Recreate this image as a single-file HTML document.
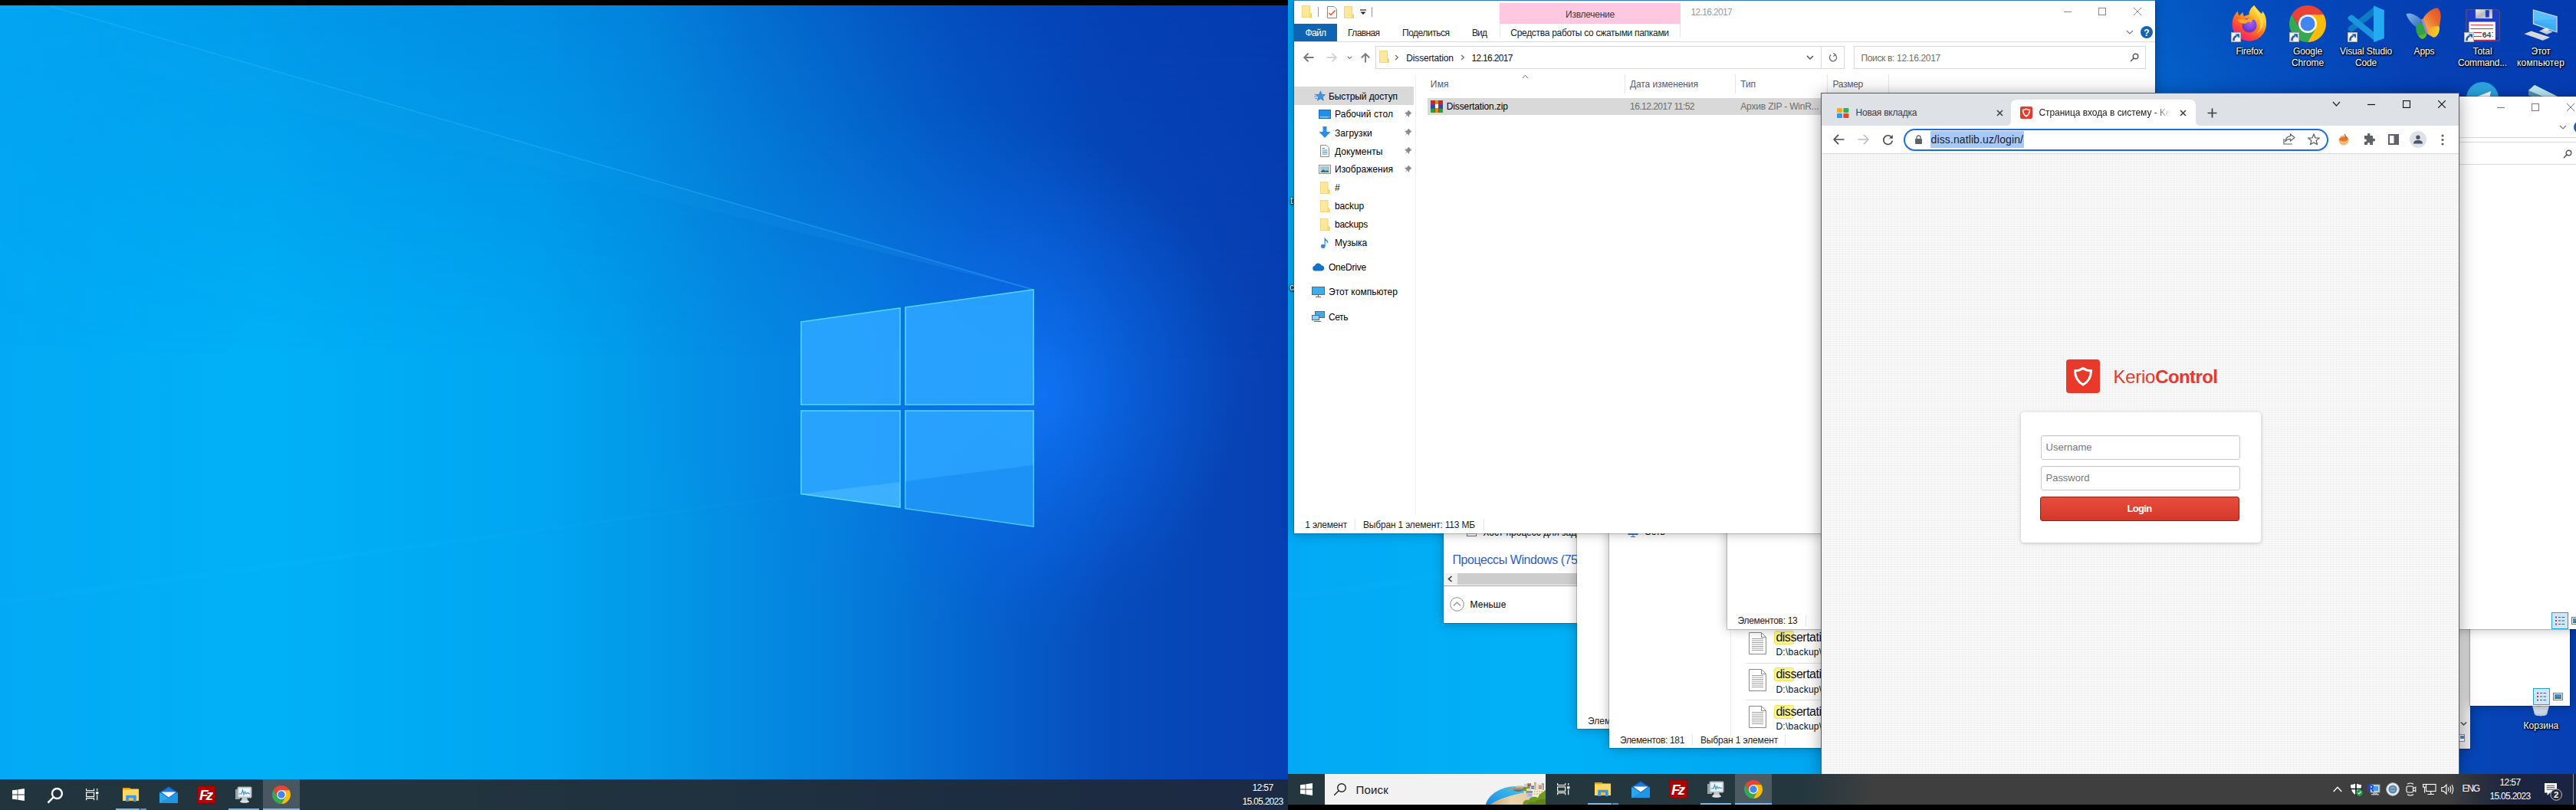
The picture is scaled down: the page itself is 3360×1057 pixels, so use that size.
<!DOCTYPE html>
<html lang="ru"><head><meta charset="utf-8"><title>Desktop</title>
<style>
html,body{margin:0;padding:0;background:#000;overflow:hidden}
body{width:3360px;height:1057px;position:relative;font-family:"Liberation Sans",sans-serif;font-size:12px;color:#000}
body>div,body>svg{position:absolute;box-sizing:border-box}
.t{white-space:nowrap;overflow:visible}
.sh{text-shadow:0 1px 2px #000,1px 1px 2px #000,0 0 3px rgba(0,0,0,.8)}
</style></head><body>
<svg width="0" height="0" style="left:0;top:0">
<defs>
<linearGradient id="wg" x1="0" x2="1" y1="0" y2="0">
<stop offset="0" stop-color="#03a9f4"/><stop offset=".208" stop-color="#00b1f7"/><stop offset=".417" stop-color="#00a6f1"/>
<stop offset=".536" stop-color="#0394e5"/><stop offset=".655" stop-color="#047edc"/><stop offset=".774" stop-color="#0560cc"/>
<stop offset=".863" stop-color="#064bbb"/><stop offset="1" stop-color="#063fb3"/>
</linearGradient>
<linearGradient id="wtx" x1="0" x2="1680" y1="0" y2="0" gradientUnits="userSpaceOnUse">
<stop offset="0" stop-color="#0438b0" stop-opacity=".04"/><stop offset=".25" stop-color="#0438b0" stop-opacity=".20"/><stop offset=".5" stop-color="#0438b0" stop-opacity=".24"/><stop offset=".655" stop-color="#0438b0" stop-opacity=".44"/><stop offset=".75" stop-color="#0438b0" stop-opacity=".56"/><stop offset="1" stop-color="#0438b0" stop-opacity=".6"/>
</linearGradient>
<linearGradient id="wty" x1="0" x2="0" y1="0" y2="460" gradientUnits="userSpaceOnUse">
<stop offset="0" stop-color="#fff"/><stop offset="1" stop-color="#000"/>
</linearGradient>
<mask id="wtm" maskUnits="userSpaceOnUse" x="0" y="0" width="1680" height="1050"><rect width="1680" height="460" fill="url(#wty)"/></mask>
<radialGradient id="wglow" cx="0" cy="0" r="1" gradientUnits="userSpaceOnUse" gradientTransform="translate(1360 510) scale(250 330)">
<stop offset="0" stop-color="#1478ff" stop-opacity=".7"/><stop offset=".4" stop-color="#0e6cf4" stop-opacity=".42"/><stop offset="1" stop-color="#0a58dc" stop-opacity="0"/>
</radialGradient>
<radialGradient id="wglow2" cx="0" cy="0" r="1" gradientUnits="userSpaceOnUse" gradientTransform="translate(1230 470) scale(420 330)">
<stop offset="0" stop-color="#0c8cf8" stop-opacity=".42"/><stop offset=".5" stop-color="#0c84f4" stop-opacity=".22"/><stop offset="1" stop-color="#0a78ec" stop-opacity="0"/>
</radialGradient>
<linearGradient id="wbeam" x1="0" x2="1348" y1="0" y2="0" gradientUnits="userSpaceOnUse">
<stop offset="0" stop-color="#fff" stop-opacity="0"/><stop offset=".6" stop-color="#30c0ff" stop-opacity=".06"/><stop offset="1" stop-color="#40c8ff" stop-opacity=".25"/>
</linearGradient>
<symbol id="wp" viewBox="0 0 1680 1050">
<rect width="1680" height="1050" fill="url(#wg)"/>
<rect width="1680" height="460" fill="url(#wtx)" mask="url(#wtm)"/>
<rect width="1680" height="1050" fill="url(#wglow2)"/>
<rect width="1680" height="1050" fill="url(#wglow)"/>
<polygon points="1348,371 65,1 0,-18 0,40" fill="url(#wbeam)" opacity=".5"/>
<line x1="1348" y1="371" x2="65" y2="1" stroke="#38b8ff" stroke-opacity=".4" stroke-width="1.5"/>
<polygon points="1045,637.5 0,774 0,784 1045,640" fill="#5fd8ff" opacity=".03"/>
<g fill="#2aa5ff" fill-opacity=".92" stroke="#55d4ff" stroke-width="1.6">
<polygon points="1045,413 1174,395 1174,521 1045,521"/>
<polygon points="1181,394 1348,371 1348,521 1181,521"/>
<polygon points="1045,529 1174,529 1174,655 1045,637.5"/>
<polygon points="1181,529 1348,529 1348,680 1181,656.5"/>
</g>
<polygon points="1045,637.5 1174,622 1174,655" fill="#7fe0ff" opacity=".25"/>
<polygon points="1181,621 1348,600 1348,680 1181,656.5" fill="#0a78e8" opacity=".35"/>
</symbol>
</defs>
</svg>
<svg style="left:0;top:7px" width="1680" height="1050"><use href="#wp"/></svg>
<svg style="left:1680px;top:0" width="1680" height="1050"><use href="#wp"/></svg>
<div style="left:0px;top:1017px;width:1680px;height:40px;background:linear-gradient(90deg,#22343d 0%,#22343d 30%,#1f3040 60%,#1b2943 100%)"></div>
<svg style="left:16px;top:1029px;" width="16" height="16" viewBox="0 0 16 16"><g fill="#fff"><polygon points="0,2.3 6.6,1.4 6.6,7.6 0,7.6"/><polygon points="7.4,1.3 16,0 16,7.6 7.4,7.6"/><polygon points="0,8.4 6.6,8.4 6.6,14.6 0,13.7"/><polygon points="7.4,8.4 16,8.4 16,16 7.4,14.7"/></g></svg>
<svg style="left:61px;top:1026.5px;" width="22" height="22" viewBox="0 0 18 18"><g fill="none" stroke="#fff" stroke-width="2"><circle cx="11" cy="7" r="5.3"/><line x1="7.2" y1="10.8" x2="1.2" y2="16.8"/></g></svg>
<svg style="left:111.7px;top:1029.3px;" width="17" height="16" viewBox="0 0 17 16"><g fill="none" stroke="#fff" stroke-width="1.2"><path d="M.6,0V2.5H10.6V0 M.6,15.3V12.7H10.6V15.3"/><rect x=".6" y="4.9" width="10" height="5.6"/><path d="M14.7,0V2.8 M14.7,8.2V15.3"/></g><rect x="13.1" y="4.2" width="3.3" height="3.1" fill="#fff"/></svg>
<div style="left:343px;top:1017px;width:48px;height:40px;background:rgba(255,255,255,.18)"></div>
<svg style="left:159.7px;top:1028px;" width="21.6" height="18" viewBox="0 0 21.6 18"><path d="M0,.9 a.9,.9 0 0 1 .9,-.9 h8.2 l1.4,1.5 h10.2 a.9,.9 0 0 1 .9,.9 v14.6 h-21.6z" fill="#ffd55c"/><path d="M0,.9 a.9,.9 0 0 1 .9,-.9 h8.2 l1.4,1.5 l-1.2,1.1 h-9.3z" fill="#eaa200"/><path d="M0,2.6h21.6v14.4h-21.6z" fill="#ffd862"/><path d="M4.2,18v-7.2a1,1 0 0 1 1,-1h11.6a1,1 0 0 1 1,1v7.2h-3.9v-4.7h-5.7v4.7z" fill="#3b97e8"/><rect x="8.2" y="13.3" width="5.7" height="3.7" fill="#f6be2e"/></svg>
<svg style="left:208px;top:1025px;" width="24" height="24" viewBox="0 0 24 24"><path d="M0,9 L12,1 L24,9 V23 H0z" fill="#0f5fb8"/><path d="M2.5,9 L12,2.8 L21.5,9 V14 H2.5z" fill="#1d7ad6"/><path d="M2.5,8.5 H21.5 L12,15.5z" fill="#fff"/><path d="M0,9 L12,16.5 L24,9 V23 H0z" fill="#2ba7ee"/><path d="M24,9 V23 H0 L24,9z" fill="#1a8fe0" opacity=".7"/></svg>
<svg style="left:257px;top:1025px;" width="24" height="24" viewBox="0 0 24 24"><rect x=".5" y=".5" width="23" height="23" fill="#b30000" stroke="#8e0000" stroke-dasharray="1.5 1"/><text x="3" y="19" font-family="Liberation Sans,sans-serif" font-weight="bold" font-style="italic" font-size="19" fill="#fff" textLength="18">Fz</text></svg>
<svg style="left:306px;top:1025px;" width="24" height="24" viewBox="0 0 24 24"><rect x="1" y="5" width="6" height="13" fill="#9aa3a8"/><rect x="4" y="2" width="18" height="14" rx="1" fill="#d8dde0" stroke="#9ea7ab"/><rect x="6" y="4" width="14" height="10" fill="#e9f4fb"/><polyline points="6,11 9,11 10.5,6 12,12 13.5,8 15,11 17,9.5 20,11" fill="none" stroke="#3a8fd0" stroke-width="1.1"/><path d="M10,16h6l1.5,4h-9z" fill="#c3c9cc"/><ellipse cx="13" cy="21" rx="6" ry="1.8" fill="#dfe3e5"/></svg>
<svg style="left:355px;top:1025px;" width="24" height="24" viewBox="0 0 24 24"><path d="M12,6 L22.392,6 A12,12 0 0 0 1.608,6 L6.804,15z" fill="#ea4335"/><path d="M12,6 L22.392,6 A12,12 0 0 1 12,24 L17.196,15z" fill="#fbbc05"/><path d="M17.196,15 L12,24 A12,12 0 0 1 1.608,6 L6.804,15z" fill="#34a853"/><circle cx="12" cy="12" r="6" fill="#fff"/><circle cx="12" cy="12" r="4.75" fill="#4285f4"/></svg>
<div style="left:151px;top:1055px;width:31px;height:2px;background:#76b9ed"></div>
<div style="left:183px;top:1055px;width:8px;height:2px;background:#5d93bf"></div>
<div style="left:298px;top:1055px;width:40px;height:2px;background:#76b9ed"></div>
<div style="left:343px;top:1055px;width:48px;height:2px;background:#76b9ed"></div>
<div class="t" style="top:1020.3px;height:17px;line-height:17px;font-size:12px;color:#fff;letter-spacing:-0.606px;left:1347px;width:600px;text-align:center;">12:57</div>
<div class="t" style="top:1038.3px;height:17px;line-height:17px;font-size:12px;color:#fff;letter-spacing:-0.706px;left:1347px;width:600px;text-align:center;">15.05.2023</div>
<svg style="left:2910px;top:6px;" width="48" height="48" viewBox="0 0 48 48"><defs><linearGradient id="ffg" x1="40" y1="4" x2="10" y2="46" gradientUnits="userSpaceOnUse"><stop offset="0" stop-color="#fff04a"/><stop offset=".28" stop-color="#ffbd2e"/><stop offset=".52" stop-color="#ff7a1a"/><stop offset=".78" stop-color="#ff3a4a"/><stop offset="1" stop-color="#e81b8c"/></linearGradient><radialGradient id="ffp" cx=".55" cy=".35" r=".7"><stop offset="0" stop-color="#a95cff"/><stop offset="1" stop-color="#5b2fbf"/></radialGradient></defs><path d="M30.2,1 C33,5 36,8 40,12 C41,10.5 41,9 40.5,8 C45,13 46.5,19 46,26 C45.5,38 36,47.5 24,47.5 C11,47.5 1.6,38 1.6,26 C1.6,19 4,13 9,8.5 C9,11 9.5,13 11,14.5 C12.5,12.5 14,11 16,10 C15.5,12 16,14 17,15.5 C19,14 21.5,13.5 23.5,13.5 C23,9 26,4 30.2,1z" fill="url(#ffg)"/><path d="M30.2,1 C28,8 34,12 37,18 C40,25 38,33 33,38 C40,34 43.5,26 41.5,19 C40,13 34,8 30.2,1z" fill="#ffe24a" opacity=".75"/><circle cx="24" cy="27" r="9.6" fill="url(#ffp)"/><path d="M8,20 C12,18.5 17,18.5 20.5,20 C23,17.5 27,17 31,18.2 C28.5,19.2 27,21 26.5,23.5 C24,21.8 21,22.4 19.5,24.6 C16,25.5 11,24 8,20z" fill="#ffa726"/><path d="M14.5,26 C13,31 16,37 22,39 C17,39.5 11.5,35 11,29 C11,27.5 12.5,26 14.5,26z" fill="#ff5a2a" opacity=".55"/></svg>
<svg style="left:2910px;top:42px;" width="13" height="13" viewBox="0 0 13 13"><rect x=".5" y=".5" width="12" height="12" fill="#f2f2f2" stroke="#a8adb4"/><path d="M3.6,11.2 C3,7.6 4.8,5.4 7.6,5 " fill="none" stroke="#2b5ea8" stroke-width="2.6"/><path d="M5.6,2.2 H11 V7.8 L9,5.9 L7.4,4.2z" fill="#2b5ea8"/></svg>
<div class="t sh" style="top:58.5px;height:17px;line-height:17px;font-size:12px;color:#fff;letter-spacing:-0.241px;left:2634px;width:600px;text-align:center;">Firefox</div>
<svg style="left:2986px;top:6.8px;" width="48" height="48" viewBox="0 0 24 24"><path d="M12,6 L22.392,6 A12,12 0 0 0 1.608,6 L6.804,15z" fill="#ea4335"/><path d="M12,6 L22.392,6 A12,12 0 0 1 12,24 L17.196,15z" fill="#fbbc05"/><path d="M17.196,15 L12,24 A12,12 0 0 1 1.608,6 L6.804,15z" fill="#34a853"/><circle cx="12" cy="12" r="6" fill="#fff"/><circle cx="12" cy="12" r="4.75" fill="#4285f4"/></svg>
<svg style="left:2986px;top:42px;" width="13" height="13" viewBox="0 0 13 13"><rect x=".5" y=".5" width="12" height="12" fill="#f2f2f2" stroke="#a8adb4"/><path d="M3.6,11.2 C3,7.6 4.8,5.4 7.6,5 " fill="none" stroke="#2b5ea8" stroke-width="2.6"/><path d="M5.6,2.2 H11 V7.8 L9,5.9 L7.4,4.2z" fill="#2b5ea8"/></svg>
<div class="t sh" style="top:58.5px;height:17px;line-height:17px;font-size:12px;color:#fff;letter-spacing:-0.117px;left:2710px;width:600px;text-align:center;">Google</div>
<div class="t sh" style="top:73.5px;height:17px;line-height:17px;font-size:12px;color:#fff;letter-spacing:-0.115px;left:2710px;width:600px;text-align:center;">Chrome</div>
<svg style="left:3062px;top:7px;" width="48" height="48" viewBox="0 0 48 48"><path d="M35.7,1.3 L1.3,28.6 C0,30 0,32 1.5,33 L4,34.5 C5.2,35 6.5,34.6 7.6,33.6 L35.7,12z" fill="#0b7cc2"/><path d="M1.3,18.8 C0,17.5 0,15.5 1.5,14.4 L4,12.8 C5.2,12.2 6.5,12.6 7.6,13.6 L35.7,36 V46.6z" fill="#1a96dc"/><path d="M34.4,.4 L47.8,6.3 V42.9 L35.3,47.8 C34.6,48 34,47.5 34,46.5 V1.6 C34,.8 34.2,.4 34.4,.4z" fill="#25abf3"/></svg>
<svg style="left:3062px;top:42px;" width="13" height="13" viewBox="0 0 13 13"><rect x=".5" y=".5" width="12" height="12" fill="#f2f2f2" stroke="#a8adb4"/><path d="M3.6,11.2 C3,7.6 4.8,5.4 7.6,5 " fill="none" stroke="#2b5ea8" stroke-width="2.6"/><path d="M5.6,2.2 H11 V7.8 L9,5.9 L7.4,4.2z" fill="#2b5ea8"/></svg>
<div class="t sh" style="top:58.5px;height:17px;line-height:17px;font-size:12px;color:#fff;letter-spacing:-0.141px;left:2786px;width:600px;text-align:center;">Visual Studio</div>
<div class="t sh" style="top:73.5px;height:17px;line-height:17px;font-size:12px;color:#fff;letter-spacing:-0.172px;left:2786px;width:600px;text-align:center;">Code</div>
<svg style="left:3138px;top:10px;" width="47" height="42" viewBox="0 0 47 42"><defs><linearGradient id="bf1" x1="22" y1="22" x2="44" y2="4" gradientUnits="userSpaceOnUse"><stop offset="0" stop-color="#f6a848"/><stop offset=".6" stop-color="#e96a2c"/><stop offset="1" stop-color="#e2542a"/></linearGradient><linearGradient id="bf2" x1="2" y1="8" x2="20" y2="24" gradientUnits="userSpaceOnUse"><stop offset="0" stop-color="#8cc0ec"/><stop offset="1" stop-color="#3f74c4"/></linearGradient><linearGradient id="bf3" x1="28" y1="30" x2="43" y2="34" gradientUnits="userSpaceOnUse"><stop offset="0" stop-color="#f4a030"/><stop offset="1" stop-color="#fad21e"/></linearGradient></defs><path d="M20.6,16 C12,8 5,6.5 .5,8 C2,14 7,21 14.5,26 L21,24z" fill="url(#bf2)" opacity=".9"/><path d="M15.2,21.3 C12.5,25 12.5,31 16,36 C18,39.5 21,41.5 23,40.5 C26,39 28,36 27,31 L22,19.5z" fill="#2fa444"/><path d="M16,36 C18,39.5 21,41.5 23,40.5 C25.5,39 27.5,36.5 27.2,33 C23,35 19,36.5 16,36z" fill="#5cb534"/><path d="M21.5,16 C26,7 34,1 41.5,.3 C45.5,4 46.5,10 45,17 C44.5,21 44,23.5 43.8,25 L26,30.5z" fill="url(#bf1)"/><path d="M26,29.5 C32,25 39,23.5 43.8,24.8 C44.5,29 43.5,33 41,36 C39,38.5 36.5,39.5 35,38.2 L28.5,34.5z" fill="url(#bf3)"/><path d="M19.8,15.6 L22.8,14.6 L29,32.4 L26.6,33.6z" fill="#9d86cc"/></svg>
<div class="t sh" style="top:58.5px;height:17px;line-height:17px;font-size:12px;color:#fff;letter-spacing:-0.090px;left:2862px;width:600px;text-align:center;">Apps</div>
<svg style="left:3216px;top:11.5px;" width="45" height="42" viewBox="0 0 45 42"><defs><linearGradient id="tcm" x1="0" y1="0" x2="1" y2="1"><stop offset="0" stop-color="#f4f4f4"/><stop offset=".5" stop-color="#b8b8b8"/><stop offset="1" stop-color="#ececec"/></linearGradient></defs><path d="M2,.3 H41.5 L44.6,3 V41.7 H.4 V2 A1.6,1.6 0 0 1 2,.3z" fill="#1d3cc8" stroke="#8a7440" stroke-width=".5"/><path d="M4.6,1.5V11.5" stroke="#10248c" stroke-width=".6" stroke-dasharray="1 .8"/><rect x="12.9" y=".3" width="21.9" height="11.8" fill="url(#tcm)"/><rect x="25.9" y="1.2" width="4.9" height="9.4" fill="#1d3cc8"/><rect x="4.4" y="16.5" width="34.4" height="23.5" fill="#fff"/><path d="M6.5,20.7H36 M6.5,25.6H36 M6.5,30.5H21 M34.5,30.5H36 M6.5,35.6H21 M34.5,35.6H36" stroke="#d8202e" stroke-width="1"/><text x="21.5" y="36.6" font-family="Liberation Mono,monospace" font-weight="bold" font-size="10.5" fill="#4a4a52" textLength="12">64</text><rect x="4.4" y="39.8" width="35" height="2" fill="#c8283c"/><rect x="40" y="37.5" width="1.4" height="1.4" fill="#0a1460"/></svg>
<svg style="left:3214px;top:42px;" width="13" height="13" viewBox="0 0 13 13"><rect x=".5" y=".5" width="12" height="12" fill="#f2f2f2" stroke="#a8adb4"/><path d="M3.6,11.2 C3,7.6 4.8,5.4 7.6,5 " fill="none" stroke="#2b5ea8" stroke-width="2.6"/><path d="M5.6,2.2 H11 V7.8 L9,5.9 L7.4,4.2z" fill="#2b5ea8"/></svg>
<div class="t sh" style="top:58.5px;height:17px;line-height:17px;font-size:12px;color:#fff;letter-spacing:-0.072px;left:2938px;width:600px;text-align:center;">Total</div>
<div class="t sh" style="top:73.5px;height:17px;line-height:17px;font-size:12px;color:#fff;letter-spacing:-0.136px;left:2938px;width:600px;text-align:center;">Command...</div>
<svg style="left:3292px;top:11px;" width="44" height="43" viewBox="0 0 44 43"><path d="M11.8,1.2 L43.5,10.2 V31.8 L11.8,20.6z" fill="#d4dee6"/><path d="M12.9,2.8 L42.4,11.2 V30.2 L12.9,19.6z" fill="#3cacf6"/><path d="M12.9,2.8 L42.4,11.2 V14 L12.9,16z" fill="#62c4ff" opacity=".8"/><path d="M12.9,12 L42.4,14 V22 L12.9,17z" fill="#52baff" opacity=".45"/><path d="M42.4,11.2 L43.5,10.2 V31.8 L42.4,30.2z" fill="#aebac4"/><path d="M19.7,29.6 L27.3,26.5 L38,30.5 L30,33.8z" fill="#c4ccd4"/><path d="M24,27 L31,25.5 L33,28.5 L27,30z" fill="#dfe5ea"/><path d="M.5,33.2 L9.9,29.6 L34,37.7 L24.6,41.7z" fill="#e6eaee"/><path d="M3,33.3 L27,41 M5.5,32.3 L29.3,40 M8,31.3 L31.6,39 M5,34.5 L11.5,31.8 M9.5,36 L16,33.3 M14,37.5 L20.5,34.8 M18.5,39 L25,36.3 M22.5,40.4 L29.3,37.6" stroke="#bcc5cc" stroke-width=".6"/></svg>
<div class="t sh" style="top:58.5px;height:17px;line-height:17px;font-size:12px;color:#fff;letter-spacing:-0.227px;left:3014px;width:600px;text-align:center;">Этот</div>
<div class="t sh" style="top:73.5px;height:17px;line-height:17px;font-size:12px;color:#fff;letter-spacing:0.165px;left:3014px;width:600px;text-align:center;">компьютер</div>
<svg style="left:3217px;top:107px;" width="42" height="42" viewBox="0 0 42 42"><circle cx="21" cy="21" r="21" fill="#2aa3dc"/><path d="M9,21 L32,12 L28,32 L21,27 L17,31 L16,25z" fill="#fff"/></svg>
<svg style="left:3298px;top:110px;" width="44" height="30" viewBox="0 0 44 30"><path d="M0,8 L8,1 L44,19 L44,30 L0,14z" fill="#8cc8dc"/><path d="M0,8 L8,1 L44,19 L36,23z" fill="#b8e6f2"/><path d="M0,8 L36,23 L36,30 L0,14z" fill="#5a90b0"/></svg>
<svg style="left:3300px;top:914px;" width="28" height="22" viewBox="0 0 28 22"><path d="M1,0 H27 L22,18 C20,21 8,21 6,18z" fill="#e6ecf0" opacity=".93"/><path d="M6,18 C8,21 20,21 22,18 L22.6,15 C20,18 8,18 5.4,15z" fill="#c4ced6"/><path d="M10,8 l2,-3 l2,3z" fill="#3a8ad8" opacity=".6"/></svg>
<div class="t sh" style="top:939.3px;height:17px;line-height:17px;font-size:12px;color:#fff;letter-spacing:-0.017px;left:3014.4px;width:600px;text-align:center;">Корзина</div>
<div class="t sh" style="top:254.3px;height:17px;line-height:17px;font-size:12px;color:#fff;left:1683px;">t</div>
<div class="t sh" style="top:367.3px;height:17px;line-height:17px;font-size:12px;color:#fff;left:1682px;">c</div>
<div style="left:3150px;top:560px;width:72px;height:416.5px;background:#e9e9e9;box-shadow:0 0 14px rgba(0,0,0,.30),0 0 0 1px rgba(0,0,0,.18);"></div>
<svg style="left:3209px;top:941px;" width="9" height="7" viewBox="0 0 9 7"><polyline points="1,1.5 4.5,5 8,1.5" fill="none" stroke="#444" stroke-width="1.4"/></svg>
<svg style="left:3207px;top:958px;" width="8" height="10" viewBox="0 0 8 10"><rect x=".5" y=".5" width="7" height="9" fill="#fff" stroke="#889"/><rect x="2" y="2" width="5" height="4" fill="#4a86c8"/></svg>
<div style="left:3222px;top:640px;width:130px;height:281px;background:#fff;box-shadow:0 0 14px rgba(0,0,0,.30),0 0 0 1px rgba(0,0,0,.18);"></div>
<div style="left:3304px;top:898px;width:22px;height:22px;background:#cce8ff;border:1px solid #26a0da"></div>
<svg style="left:3308px;top:903px;" width="14" height="12" viewBox="0 0 14 12"><g stroke="#555" stroke-width="1"><path d="M5,1.5H8 M9.5,1.5H13 M5,6H8 M9.5,6H13 M5,10.5H8 M9.5,10.5H13"/></g><g fill="#c33"><rect x="1" y=".5" width="2" height="2"/><rect x="1" y="5" width="2" height="2"/><rect x="1" y="9.5" width="2" height="2"/></g></svg>
<svg style="left:3330px;top:904px;" width="13" height="10" viewBox="0 0 13 10"><rect x=".5" y=".5" width="12" height="9" fill="#fff" stroke="#777"/><rect x="2" y="2" width="9" height="6" fill="#4a86c8"/><path d="M2,8 L5,5 L7,7 L9,5.5 L11,8z" fill="#3a7a3a"/></svg>
<div style="left:3120px;top:126px;width:300px;height:694.5px;background:#fff;box-shadow:0 0 14px rgba(0,0,0,.30),0 0 0 1px rgba(0,0,0,.18);"></div>
<svg style="left:3257px;top:135px;" width="10" height="10" viewBox="0 0 10 10"><path d="M0,5.5H10" stroke="#777" stroke-width="1"/></svg>
<svg style="left:3302px;top:135px;" width="10" height="10" viewBox="0 0 10 10"><rect x=".5" y=".5" width="9" height="9" fill="none" stroke="#777" stroke-width="1"/></svg>
<svg style="left:3347.5px;top:135px;" width="10" height="10" viewBox="0 0 10 10"><path d="M0,0L10,10M10,0L0,10" stroke="#777" stroke-width="1" fill="none"/></svg>
<svg style="left:3338px;top:163px;" width="10" height="7" viewBox="0 0 10 7"><polyline points="1,1 5,5 9,1" fill="none" stroke="#777" stroke-width="1.1"/></svg>
<div style="left:3357px;top:158px;width:16px;height:16px;background:#1464b4;border-radius:8px"></div>
<div style="left:3120px;top:179px;width:300px;height:1px;background:#dadbdc"></div>
<div style="left:3120px;top:185px;width:300px;height:30px;border-top:1px solid #d9d9d9;border-bottom:1px solid #d9d9d9"></div>
<svg style="left:3343px;top:195px;" width="12" height="12" viewBox="0 0 12 12"><circle cx="7.5" cy="4.5" r="3.3" fill="none" stroke="#555" stroke-width="1.4"/><path d="M5,7 L1,11" stroke="#555" stroke-width="1.6"/></svg>
<div style="left:3328px;top:798.5px;width:22px;height:22px;background:#cce8ff;border:1px solid #26a0da"></div>
<svg style="left:3332px;top:803.5px;" width="14" height="12" viewBox="0 0 14 12"><g stroke="#555" stroke-width="1"><path d="M5,1.5H8 M9.5,1.5H13 M5,6H8 M9.5,6H13 M5,10.5H8 M9.5,10.5H13"/></g><g fill="#c33"><rect x="1" y=".5" width="2" height="2"/><rect x="1" y="5" width="2" height="2"/><rect x="1" y="9.5" width="2" height="2"/></g></svg>
<svg style="left:3354px;top:804.5px;" width="13" height="10" viewBox="0 0 13 10"><rect x=".5" y=".5" width="12" height="9" fill="#fff" stroke="#777"/><rect x="2" y="2" width="9" height="6" fill="#4a86c8"/><path d="M2,8 L5,5 L7,7 L9,5.5 L11,8z" fill="#3a7a3a"/></svg>
<div style="left:1883px;top:600px;width:400px;height:213px;background:#fff;box-shadow:0 0 14px rgba(0,0,0,.30),0 0 0 1px rgba(0,0,0,.18);"></div>
<svg style="left:1913px;top:687.5px;" width="13" height="12" viewBox="0 0 13 12"><rect x=".5" y=".5" width="12" height="11" fill="#fff" stroke="#777"/><rect x="2" y="2" width="5" height="4" fill="#1f5fbf"/><path d="M8,3H11M8,5H11M2,8H11" stroke="#888"/></svg>
<div class="t" style="top:686.8px;height:17px;line-height:17px;font-size:12px;color:#000;left:1934.5px;">Хост-процесс для задач Windows</div>
<div class="t" style="top:720px;height:22px;line-height:22px;font-size:16px;color:#2b5fc2;letter-spacing:-0.426px;left:1894.5px;">Процессы Windows (75)</div>
<div style="left:1883px;top:748px;width:400px;height:15px;background:#f0f0f0"></div>
<div style="left:1901px;top:748px;width:380px;height:15px;background:#cdcdcd"></div>
<svg style="left:1888px;top:751px;" width="7" height="9" viewBox="0 0 7 9"><polyline points="5.5,1 1.5,4.5 5.5,8" fill="none" stroke="#333" stroke-width="1.6"/></svg>
<div style="left:1883px;top:764px;width:400px;height:1px;background:#a0a0a0"></div>
<svg style="left:1891px;top:779px;" width="19" height="19" viewBox="0 0 19 19"><circle cx="9.5" cy="9.5" r="8.8" fill="#fff" stroke="#8a8a8a" stroke-width="1"/><polyline points="5,11.5 9.5,7 14,11.5" fill="none" stroke="#8a8a8a" stroke-width="1.2"/></svg>
<div class="t" style="top:781.3px;height:17px;line-height:17px;font-size:12px;color:#000;letter-spacing:0.169px;left:1917.5px;">Меньше</div>
<div style="left:2057px;top:600px;width:400px;height:351px;background:#fff;box-shadow:0 0 14px rgba(0,0,0,.30),0 0 0 1px rgba(0,0,0,.18);"></div>
<div class="t" style="top:932.8px;height:17px;line-height:17px;font-size:12px;color:#1e1e1e;left:2071px;">Элементов: 5</div>
<div style="left:2098.5px;top:600px;width:400px;height:376px;background:#fff;box-shadow:0 0 14px rgba(0,0,0,.30),0 0 0 1px rgba(0,0,0,.18);"></div>
<svg style="left:2123px;top:689px;" width="14" height="12" viewBox="0 0 14 12"><rect x="1" y=".5" width="12" height="8" fill="#38a0e8" stroke="#5a6a78"/><path d="M4,11.5H10 M7,8.5V11.5" stroke="#5a6a78"/></svg>
<div class="t" style="top:686.3px;height:17px;line-height:17px;font-size:12px;color:#000;left:2145px;">Сеть</div>
<div style="left:2256.5px;top:696px;width:1px;height:268px;background:#ececec"></div>
<svg style="left:2281px;top:824.5px;" width="23" height="29" viewBox="0 0 23 29"><path d="M.5,.5H16.5L22.5,6.5V28.5H.5z" fill="#fff" stroke="#8a8a8a"/><path d="M16.5,.5V6.5H22.5" fill="none" stroke="#8a8a8a"/><path d="M4,8.5H19M4,11H19M4,13.5H19M4,16H19M4,18.5H19M4,21H19M4,23.5H19" stroke="#999" stroke-width=".9"/></svg>
<div style="left:2313.5px;top:823px;width:26.5px;height:18px;background:#fff78a;border:1px solid #f0e060;border-radius:3px"></div>
<div class="t" style="top:821px;height:22px;line-height:22px;font-size:16px;color:#111;letter-spacing:-0.486px;left:2316.4px;">dissertation</div>
<div class="t" style="top:843.3px;height:17px;line-height:17px;font-size:12px;color:#111;letter-spacing:0.263px;left:2316.4px;">D:\backup\</div>
<div style="left:2277px;top:865px;width:200px;height:1px;background:#e2e2e2"></div>
<svg style="left:2281px;top:872.7px;" width="23" height="29" viewBox="0 0 23 29"><path d="M.5,.5H16.5L22.5,6.5V28.5H.5z" fill="#fff" stroke="#8a8a8a"/><path d="M16.5,.5V6.5H22.5" fill="none" stroke="#8a8a8a"/><path d="M4,8.5H19M4,11H19M4,13.5H19M4,16H19M4,18.5H19M4,21H19M4,23.5H19" stroke="#999" stroke-width=".9"/></svg>
<div style="left:2313.5px;top:871.2px;width:26.5px;height:18px;background:#fff78a;border:1px solid #f0e060;border-radius:3px"></div>
<div class="t" style="top:869.2px;height:22px;line-height:22px;font-size:16px;color:#111;letter-spacing:-0.486px;left:2316.4px;">dissertation</div>
<div class="t" style="top:891.5px;height:17px;line-height:17px;font-size:12px;color:#111;letter-spacing:0.263px;left:2316.4px;">D:\backup\</div>
<div style="left:2277px;top:913.2px;width:200px;height:1px;background:#e2e2e2"></div>
<svg style="left:2281px;top:921px;" width="23" height="29" viewBox="0 0 23 29"><path d="M.5,.5H16.5L22.5,6.5V28.5H.5z" fill="#fff" stroke="#8a8a8a"/><path d="M16.5,.5V6.5H22.5" fill="none" stroke="#8a8a8a"/><path d="M4,8.5H19M4,11H19M4,13.5H19M4,16H19M4,18.5H19M4,21H19M4,23.5H19" stroke="#999" stroke-width=".9"/></svg>
<div style="left:2313.5px;top:919.5px;width:26.5px;height:18px;background:#fff78a;border:1px solid #f0e060;border-radius:3px"></div>
<div class="t" style="top:917.5px;height:22px;line-height:22px;font-size:16px;color:#111;letter-spacing:-0.486px;left:2316.4px;">dissertation</div>
<div class="t" style="top:939.8px;height:17px;line-height:17px;font-size:12px;color:#111;letter-spacing:0.263px;left:2316.4px;">D:\backup\</div>
<div class="t" style="top:958px;height:17px;line-height:17px;font-size:12px;color:#1e1e1e;letter-spacing:-0.326px;left:2113px;">Элементов: 181</div>
<div style="left:2207px;top:958px;width:1px;height:15px;background:#e5e5e5"></div>
<div class="t" style="top:958px;height:17px;line-height:17px;font-size:12px;color:#1e1e1e;letter-spacing:-0.150px;left:2218px;">Выбран 1 элемент</div>
<div style="left:2328px;top:958px;width:1px;height:15px;background:#e5e5e5"></div>
<div style="left:2252.6px;top:600px;width:300px;height:221px;background:#fff;box-shadow:0 0 14px rgba(0,0,0,.30),0 0 0 1px rgba(0,0,0,.18);"></div>
<div class="t" style="top:801.8px;height:17px;line-height:17px;font-size:12px;color:#1e1e1e;letter-spacing:-0.299px;left:2266.5px;">Элементов: 13</div>
<div style="left:2355px;top:802px;width:1px;height:15px;background:#e5e5e5"></div>
<div style="left:1688px;top:0px;width:1123px;height:696px;background:#fff;box-shadow:0 0 14px rgba(0,0,0,.30),0 0 0 1px rgba(0,0,0,.18);"></div>
<div style="left:1688px;top:0px;width:1123px;height:1px;background:#2c7fc6"></div>
<svg style="left:1698px;top:7px;" width="13" height="16" viewBox="0 0 13 16"><path d="M.4,.4H10.5V11H12.6V15.6H.4z" fill="#ffe89a" stroke="#f2cc5a" stroke-width=".8"/><path d="M10.5,11H12.6V15.6H10.5z" fill="#ffd966" stroke="#f2cc5a" stroke-width=".6"/></svg>
<div style="left:1719px;top:9px;width:1px;height:13px;background:#9a9a9a"></div>
<svg style="left:1731px;top:8px;" width="13" height="16" viewBox="0 0 13 16"><path d="M.5,.5H9L12.5,4V15.5H.5z" fill="#fbfbfb" stroke="#8a8a8a"/><polyline points="2.5,9 5,11.5 10.5,5.5" fill="none" stroke="#f25022" stroke-width="1.5"/></svg>
<svg style="left:1753px;top:8px;" width="13" height="16" viewBox="0 0 13 16"><path d="M.4,.4H10.5V11H12.6V15.6H.4z" fill="#ffe89a" stroke="#f2cc5a" stroke-width=".8"/><path d="M10.5,11H12.6V15.6H10.5z" fill="#ffd966" stroke="#f2cc5a" stroke-width=".6"/></svg>
<svg style="left:1773px;top:12px;" width="10" height="8" viewBox="0 0 10 8"><path d="M1,1H9" stroke="#222" stroke-width="1.2"/><path d="M1.5,3.5H8.5L5,7z" fill="#222"/></svg>
<div style="left:1789px;top:9px;width:1px;height:13px;background:#9a9a9a"></div>
<div style="left:1956px;top:4px;width:236px;height:27px;background:#ffc8e0"></div>
<div class="t" style="top:10.6px;height:17px;line-height:17px;font-size:12px;color:#3c3c3c;letter-spacing:-0.244px;left:1774px;width:600px;text-align:center;">Извлечение</div>
<div class="t" style="top:8.3px;height:17px;line-height:17px;font-size:12px;color:#9a9a9a;letter-spacing:-0.656px;left:2205.5px;">12.16.2017</div>
<svg style="left:2692px;top:10px;" width="10" height="10" viewBox="0 0 10 10"><path d="M0,5.5H10" stroke="#8a8a8a" stroke-width="1"/></svg>
<svg style="left:2737px;top:10px;" width="10" height="10" viewBox="0 0 10 10"><rect x=".5" y=".5" width="9" height="9" fill="none" stroke="#8a8a8a" stroke-width="1"/></svg>
<svg style="left:2783px;top:10px;" width="10" height="10" viewBox="0 0 10 10"><path d="M0,0L10,10M10,0L0,10" stroke="#8a8a8a" stroke-width="1" fill="none"/></svg>
<div style="left:1688px;top:31px;width:56px;height:23px;background:#0f63b3"></div>
<div class="t" style="top:35.3px;height:17px;line-height:17px;font-size:12px;color:#fff;letter-spacing:-0.629px;left:1416px;width:600px;text-align:center;">Файл</div>
<div class="t" style="top:35.3px;height:17px;line-height:17px;font-size:12px;color:#222;letter-spacing:-0.598px;left:1758px;">Главная</div>
<div class="t" style="top:35.3px;height:17px;line-height:17px;font-size:12px;color:#222;letter-spacing:-0.477px;left:1829px;">Поделиться</div>
<div class="t" style="top:35.3px;height:17px;line-height:17px;font-size:12px;color:#222;letter-spacing:-0.906px;left:1920px;">Вид</div>
<div style="left:1956px;top:31px;width:1px;height:17px;background:#e4e4e4"></div>
<div style="left:2191px;top:31px;width:1px;height:17px;background:#e4e4e4"></div>
<div class="t" style="top:35.3px;height:17px;line-height:17px;font-size:12px;color:#222;letter-spacing:-0.295px;left:1970.3px;">Средства работы со сжатыми папками</div>
<svg style="left:2773px;top:39px;" width="10" height="7" viewBox="0 0 10 7"><polyline points="1,1 5,5 9,1" fill="none" stroke="#777" stroke-width="1.1"/></svg>
<div style="left:2792px;top:34px;width:16px;height:16px;background:#1464b4;border-radius:8px"></div>
<div class="t" style="top:34.8px;height:17px;line-height:17px;font-size:12px;color:#fff;font-weight:bold;left:2500px;width:600px;text-align:center;">?</div>
<div style="left:1688px;top:54px;width:1123px;height:1px;background:#dadbdc"></div>
<svg style="left:1700px;top:69px;" width="14" height="12" viewBox="0 0 14 12"><path d="M6.5,.8 L1.2,6 L6.5,11.2 M1.2,6 H13.5" fill="none" stroke="#7a7a7a" stroke-width="1.9"/></svg>
<svg style="left:1730px;top:69px;" width="14" height="12" viewBox="0 0 14 12"><path d="M7.5,.8 L12.8,6 L7.5,11.2 M12.8,6 H.5" fill="none" stroke="#d4d4d4" stroke-width="1.9"/></svg>
<svg style="left:1757px;top:72.5px;" width="7" height="5" viewBox="0 0 7 5"><polyline points=".8,.8 3.5,3.5 6.2,.8" fill="none" stroke="#7a7a7a" stroke-width="1.2"/></svg>
<svg style="left:1775px;top:68.5px;" width="12" height="13" viewBox="0 0 12 13"><path d="M.8,6.5 L6,1.2 L11.2,6.5 M6,1.2 V12.5" fill="none" stroke="#7a7a7a" stroke-width="1.9"/></svg>
<div style="left:1794px;top:60px;width:612px;height:30px;border:1px solid #d9d9d9"></div>
<div style="left:2375px;top:60px;width:1px;height:30px;background:#d9d9d9"></div>
<svg style="left:1799px;top:66px;" width="13" height="16" viewBox="0 0 13 16"><path d="M.4,.4H10.5V11H12.6V15.6H.4z" fill="#ffe89a" stroke="#f2cc5a" stroke-width=".8"/><path d="M10.5,11H12.6V15.6H10.5z" fill="#ffd966" stroke="#f2cc5a" stroke-width=".6"/></svg>
<svg style="left:1819px;top:71px;" width="6" height="8" viewBox="0 0 6 8"><polyline points="1,1 4.5,4 1,7" fill="none" stroke="#6a6a6a" stroke-width="1.2"/></svg>
<div class="t" style="top:67.6px;height:17px;line-height:17px;font-size:12px;color:#111;letter-spacing:-0.155px;left:1834.3px;">Dissertation</div>
<svg style="left:1904.5px;top:71px;" width="6" height="8" viewBox="0 0 6 8"><polyline points="1,1 4.5,4 1,7" fill="none" stroke="#6a6a6a" stroke-width="1.2"/></svg>
<div class="t" style="top:67.6px;height:17px;line-height:17px;font-size:12px;color:#111;letter-spacing:-0.656px;left:1919.4px;">12.16.2017</div>
<svg style="left:2356px;top:72px;" width="10" height="7" viewBox="0 0 10 7"><polyline points="1,1 5,5 9,1" fill="none" stroke="#555" stroke-width="1.5"/></svg>
<svg style="left:2385px;top:69px;" width="12" height="13" viewBox="0 0 12 13"><path d="M8.2,2.2 A4.6,4.6 0 1 1 3.2,2.6" fill="none" stroke="#6a6a6a" stroke-width="1.3"/><path d="M6.2,.2 L9.2,2.4 L6.2,4.6" fill="none" stroke="#6a6a6a" stroke-width="1.2"/></svg>
<div style="left:2418px;top:60px;width:381px;height:30px;border:1px solid #d9d9d9"></div>
<div class="t" style="top:67.6px;height:17px;line-height:17px;font-size:12px;color:#6d6d6d;letter-spacing:-0.326px;left:2427.4px;">Поиск в: 12.16.2017</div>
<svg style="left:2778px;top:69px;" width="12" height="12" viewBox="0 0 12 12"><circle cx="7.5" cy="4.5" r="3.3" fill="none" stroke="#555" stroke-width="1.4"/><path d="M5,7 L1,11" stroke="#555" stroke-width="1.6"/></svg>
<div style="left:1688px;top:113px;width:156px;height:24px;background:#d9d9d9"></div>
<svg style="left:1714px;top:118px;" width="15" height="14" viewBox="0 0 17 16"><path d="M9.5,1 L11.6,6 L16.5,6.4 L12.8,9.8 L14,15 L9.5,12.2 L5,15 L6.2,9.8 L2.5,6.4 L7.4,6z" fill="#3c95e6" stroke="#1f6fc2" stroke-width=".7"/><path d="M0,9H4 M1,12H4.5 M.5,6H3" stroke="#3c95e6" stroke-width="1"/></svg>
<div class="t" style="top:117.6px;height:17px;line-height:17px;font-size:12px;color:#000;letter-spacing:-0.081px;left:1733px;">Быстрый доступ</div>
<svg style="left:1720px;top:142.5px;" width="16" height="12" viewBox="0 0 16 12"><rect x=".5" y=".5" width="15" height="11" fill="#1e90ea" stroke="#0f6fc8"/><path d="M1.5,9.8H14.5" stroke="#cfe8ff" stroke-width="1" stroke-dasharray="11 1 1 1"/></svg>
<div class="t" style="top:141.3px;height:17px;line-height:17px;font-size:12px;color:#000;letter-spacing:0.056px;left:1741px;">Рабочий стол</div>
<svg style="left:1830.5px;top:142.5px;" width="11" height="12" viewBox="0 0 11 12"><path d="M6,.5 L10.5,5 L9,5.6 L7.2,7.4 L7,10 L4.2,7.2 L.8,11.2 L3.8,6.8 L1,4 L3.6,3.8 L5.4,2z" fill="#8c8c8c"/></svg>
<svg style="left:1720px;top:164.7px;" width="16" height="16" viewBox="0 0 16 16"><path d="M5.5,0H10.5V7H15.5L8,15L.5,7H5.5z" fill="#2f8be6"/></svg>
<div class="t" style="top:165.5px;height:17px;line-height:17px;font-size:12px;color:#000;letter-spacing:0.050px;left:1741px;">Загрузки</div>
<svg style="left:1830.5px;top:166.7px;" width="11" height="12" viewBox="0 0 11 12"><path d="M6,.5 L10.5,5 L9,5.6 L7.2,7.4 L7,10 L4.2,7.2 L.8,11.2 L3.8,6.8 L1,4 L3.6,3.8 L5.4,2z" fill="#8c8c8c"/></svg>
<svg style="left:1722px;top:189px;" width="12" height="16" viewBox="0 0 12 16"><path d="M.5,.5H8L11.5,4V15.5H.5z" fill="#fff" stroke="#8a8a8a"/><path d="M2.5,4.5H6 M2.5,7H9.5 M2.5,9.5H9.5 M2.5,12H9.5" stroke="#3f8ad8" stroke-width="1"/></svg>
<div class="t" style="top:189.8px;height:17px;line-height:17px;font-size:12px;color:#000;letter-spacing:0.071px;left:1741px;">Документы</div>
<svg style="left:1830.5px;top:191px;" width="11" height="12" viewBox="0 0 11 12"><path d="M6,.5 L10.5,5 L9,5.6 L7.2,7.4 L7,10 L4.2,7.2 L.8,11.2 L3.8,6.8 L1,4 L3.6,3.8 L5.4,2z" fill="#8c8c8c"/></svg>
<svg style="left:1720px;top:214.5px;" width="16" height="12" viewBox="0 0 16 12"><rect x=".5" y=".5" width="15" height="11" fill="#fff" stroke="#8a8a8a"/><rect x="2" y="2" width="12" height="8" fill="#9cc8e8"/><path d="M2,10 L6,6 L9,8.5 L11,7 L14,10z" fill="#3f6f4f"/></svg>
<div class="t" style="top:213.3px;height:17px;line-height:17px;font-size:12px;color:#000;letter-spacing:0.053px;left:1741px;">Изображения</div>
<svg style="left:1830.5px;top:214.5px;" width="11" height="12" viewBox="0 0 11 12"><path d="M6,.5 L10.5,5 L9,5.6 L7.2,7.4 L7,10 L4.2,7.2 L.8,11.2 L3.8,6.8 L1,4 L3.6,3.8 L5.4,2z" fill="#8c8c8c"/></svg>
<svg style="left:1722px;top:237px;" width="12.5" height="16" viewBox="0 0 12.5 16"><path d="M.4,.4H10.0V11H12.1V15.6H.4z" fill="#ffe89a" stroke="#f2cc5a" stroke-width=".8"/><path d="M10.0,11H12.1V15.6H10.0z" fill="#ffd966" stroke="#f2cc5a" stroke-width=".6"/></svg>
<div class="t" style="top:236.8px;height:17px;line-height:17px;font-size:12px;color:#000;letter-spacing:0.312px;left:1741px;">#</div>
<svg style="left:1722px;top:261.2px;" width="12.5" height="16" viewBox="0 0 12.5 16"><path d="M.4,.4H10.0V11H12.1V15.6H.4z" fill="#ffe89a" stroke="#f2cc5a" stroke-width=".8"/><path d="M10.0,11H12.1V15.6H10.0z" fill="#ffd966" stroke="#f2cc5a" stroke-width=".6"/></svg>
<div class="t" style="top:261px;height:17px;line-height:17px;font-size:12px;color:#000;letter-spacing:-0.117px;left:1741px;">backup</div>
<svg style="left:1722px;top:285.4px;" width="12.5" height="16" viewBox="0 0 12.5 16"><path d="M.4,.4H10.0V11H12.1V15.6H.4z" fill="#ffe89a" stroke="#f2cc5a" stroke-width=".8"/><path d="M10.0,11H12.1V15.6H10.0z" fill="#ffd966" stroke="#f2cc5a" stroke-width=".6"/></svg>
<div class="t" style="top:285.2px;height:17px;line-height:17px;font-size:12px;color:#000;letter-spacing:-0.243px;left:1741px;">backups</div>
<svg style="left:1723px;top:308.6px;" width="11" height="16" viewBox="0 0 11 16"><path d="M4.5,0 C5,3 9.5,4 9.5,8 L8.5,8 C8,6 6,5.5 5.7,5 V12.5 A3,2.6 0 1 1 4.5,10.3z" fill="#2f8be6"/></svg>
<div class="t" style="top:309.4px;height:17px;line-height:17px;font-size:12px;color:#000;letter-spacing:-0.076px;left:1741px;">Музыка</div>
<svg style="left:1711px;top:343px;" width="17" height="11" viewBox="0 0 17 11"><path d="M4,10.5 A3.4,3.4 0 0 1 4,3.8 A4.6,4.6 0 0 1 12.6,3.2 A3.7,3.7 0 0 1 13.2,10.5z" fill="#1272c6"/></svg>
<div class="t" style="top:341.3px;height:17px;line-height:17px;font-size:12px;color:#000;letter-spacing:-0.211px;left:1733px;">OneDrive</div>
<svg style="left:1711px;top:374px;" width="17" height="14" viewBox="0 0 17 14"><rect x=".5" y=".5" width="16" height="10" fill="#38b0f0" stroke="#5a6a78"/><path d="M5,13.5H12 M8.5,10.5V13.5" stroke="#5a6a78" stroke-width="1.2"/></svg>
<div class="t" style="top:373.3px;height:17px;line-height:17px;font-size:12px;color:#000;letter-spacing:0.019px;left:1733px;">Этот компьютер</div>
<svg style="left:1711px;top:406px;" width="17" height="14" viewBox="0 0 17 14"><rect x="4.5" y=".5" width="12" height="8" fill="#38b0f0" stroke="#5a6a78"/><rect x=".5" y="5.5" width="9" height="6" fill="#8fd0f8" stroke="#5a6a78"/><path d="M3,13.5H12" stroke="#5a6a78"/></svg>
<div class="t" style="top:405.6px;height:17px;line-height:17px;font-size:12px;color:#000;letter-spacing:-0.426px;left:1733px;">Сеть</div>
<div style="left:1846px;top:97px;width:1px;height:576px;background:#f0f0f0"></div>
<div class="t" style="top:102.3px;height:17px;line-height:17px;font-size:12px;color:#4c607a;letter-spacing:0.208px;left:1865.8px;">Имя</div>
<svg style="left:1985px;top:97px;" width="9" height="6" viewBox="0 0 9 6"><polyline points="1,5 4.5,1.3 8,5" fill="none" stroke="#6a6a6a" stroke-width="1"/></svg>
<div style="left:2119px;top:97px;width:1px;height:25px;background:#e5e5e5"></div>
<div style="left:2263px;top:97px;width:1px;height:25px;background:#e5e5e5"></div>
<div style="left:2383px;top:97px;width:1px;height:25px;background:#e5e5e5"></div>
<div style="left:2463px;top:97px;width:1px;height:25px;background:#e5e5e5"></div>
<div class="t" style="top:102.3px;height:17px;line-height:17px;font-size:12px;color:#4c607a;letter-spacing:-0.084px;left:2125.9px;">Дата изменения</div>
<div class="t" style="top:102.3px;height:17px;line-height:17px;font-size:12px;color:#4c607a;letter-spacing:-0.172px;left:2270.3px;">Тип</div>
<div class="t" style="top:102.3px;height:17px;line-height:17px;font-size:12px;color:#4c607a;letter-spacing:-0.292px;left:2390.5px;">Размер</div>
<div style="left:1862px;top:128px;width:700px;height:22px;background:#d9d9d9"></div>
<svg style="left:1866px;top:131px;" width="16" height="16" viewBox="0 0 16 16"><rect width="16" height="16" fill="#7b3fa0"/><rect x="0" y="0" width="16" height="5" fill="#c8281e"/><rect x="0" y="5.5" width="16" height="5" fill="#2a48b8"/><rect x="0" y="11" width="16" height="5" fill="#2f9a3a"/><rect x="5.5" y="0" width="5" height="16" fill="#e88a1a"/><rect x="6" y="5" width="4" height="5" fill="#f4f4f4"/><path d="M5.5,0V16 M10.5,0V16" stroke="#5a2a10" stroke-width=".5"/></svg>
<div class="t" style="top:131.3px;height:17px;line-height:17px;font-size:12px;color:#000;letter-spacing:-0.127px;left:1886.8px;">Dissertation.zip</div>
<div class="t" style="top:131.3px;height:17px;line-height:17px;font-size:12px;color:#6d6d6d;letter-spacing:-0.533px;left:2126px;">16.12.2017 11:52</div>
<div class="t" style="top:131.3px;height:17px;line-height:17px;font-size:12px;color:#6d6d6d;letter-spacing:-0.179px;left:2270.3px;">Архив ZIP - WinR...</div>
<div class="t" style="top:676.9px;height:17px;line-height:17px;font-size:12px;color:#1e1e1e;letter-spacing:-0.210px;left:1702.3px;">1 элемент</div>
<div style="left:1767px;top:677px;width:1px;height:15px;background:#e5e5e5"></div>
<div class="t" style="top:676.9px;height:17px;line-height:17px;font-size:12px;color:#1e1e1e;letter-spacing:-0.184px;left:1778px;">Выбран 1 элемент: 113 МБ</div>
<div style="left:1934.5px;top:677px;width:1px;height:15px;background:#e5e5e5"></div>
<div style="left:2375px;top:121px;width:833px;height:889px;background-color:#f9f9f9;background-image:repeating-linear-gradient(0deg,rgba(0,0,0,.022) 0 1px,transparent 1px 3px),repeating-linear-gradient(90deg,rgba(0,0,0,.022) 0 1px,transparent 1px 4px);box-shadow:0 2px 20px rgba(0,0,0,.36);"></div>
<div style="left:2375px;top:121px;width:833px;height:43px;background:#dee1e6"></div>
<div style="left:2375px;top:121px;width:833px;height:1px;background:#5a5a5a"></div>
<div style="left:2375px;top:121px;width:1px;height:889px;background:#5a5a5a"></div>
<div style="left:3207px;top:121px;width:1px;height:889px;background:#5a5a5a"></div>
<svg style="left:2614.7px;top:129.6px;" width="257" height="34.4" viewBox="0 0 257 34.4"><path d="M0,34.4 C6,34.4 8,32.4 8,26.4 V8 C8,3 11,0 16,0 H241 C246,0 249,3 249,8 V26.4 C249,32.4 251,34.4 257,34.4z" fill="#fff"/></svg>
<div style="left:2376px;top:164px;width:831px;height:36px;background:#fff"></div>
<div style="left:2376px;top:200px;width:831px;height:1px;background:#d6d8dc"></div>
<svg style="left:2396.3px;top:140.8px;" width="15.4" height="13.1" viewBox="0 0 15.4 13.1"><rect x="0" y="0" width="7" height="6" rx="1.2" fill="#f7a81e"/><rect x="8.4" y="0" width="7" height="6" rx="1.2" fill="#2cb05a"/><rect x="0" y="7.1" width="7" height="6" rx="1.2" fill="#2f9be8"/><rect x="8.4" y="7.1" width="7" height="6" rx="1.2" fill="#ea4335"/></svg>
<div class="t" style="top:138.9px;height:17px;line-height:17px;font-size:12px;color:#3c4043;letter-spacing:-0.248px;left:2420.6px;">Новая вкладка</div>
<svg style="left:2603.5px;top:143px;" width="9" height="9" viewBox="0 0 9 9"><path d="M1,1L8,8M8,1L1,8" stroke="#3c4043" stroke-width="1.5"/></svg>
<svg style="left:2635px;top:139px;" width="16" height="16" viewBox="0 0 16 16"><rect width="16" height="16" rx="2" fill="#e8392b"/><path d="M8,3.2 C9.5,4.2 11,4.5 12.4,4.5 C12.4,8.5 11,11 8,12.8 C5,11 3.6,8.5 3.6,4.5 C5,4.5 6.5,4.2 8,3.2z" fill="none" stroke="#fff" stroke-width="1.6"/></svg>
<div style="left:2659.4px;top:137px;width:172px;height:21px;overflow:hidden;-webkit-mask-image:linear-gradient(90deg,#000 88%,transparent 100%);mask-image:linear-gradient(90deg,#000 88%,transparent 100%)"><div class="t" style="font-size:12px;line-height:21px;color:#202124;letter-spacing:-.05px">Страница входа в систему - Kerio Control</div></div>
<svg style="left:2842.5px;top:143px;" width="9" height="9" viewBox="0 0 9 9"><path d="M1,1L8,8M8,1L1,8" stroke="#3c4043" stroke-width="1.5"/></svg>
<svg style="left:2878.5px;top:141px;" width="13" height="13" viewBox="0 0 13 13"><path d="M6.5,.5V12.5M.5,6.5H12.5" stroke="#3c4043" stroke-width="1.7"/></svg>
<svg style="left:3041.5px;top:131.5px;" width="11" height="8" viewBox="0 0 11 8"><polyline points="1,1 5.5,6 10,1" fill="none" stroke="#222" stroke-width="1.2"/></svg>
<svg style="left:3088px;top:130.8px;" width="10" height="10" viewBox="0 0 10 10"><path d="M0,5.5H10" stroke="#111" stroke-width="1.2"/></svg>
<svg style="left:3134px;top:130.8px;" width="10" height="10" viewBox="0 0 10 10"><rect x=".5" y=".5" width="9" height="9" fill="none" stroke="#111" stroke-width="1.2"/></svg>
<svg style="left:3180px;top:130.8px;" width="10" height="10" viewBox="0 0 10 10"><path d="M0,0L10,10M10,0L0,10" stroke="#111" stroke-width="1.2" fill="none"/></svg>
<svg style="left:2391px;top:175px;" width="15" height="14" viewBox="0 0 15 14"><path d="M7,.8 L1.2,7 L7,13.2 M1.2,7 H14.5" fill="none" stroke="#4a4d51" stroke-width="1.7"/></svg>
<svg style="left:2423px;top:175px;" width="15" height="14" viewBox="0 0 15 14"><path d="M8,.8 L13.8,7 L8,13.2 M13.8,7 H.5" fill="none" stroke="#bdc1c6" stroke-width="1.7"/></svg>
<svg style="left:2454.5px;top:174.5px;" width="15" height="15" viewBox="0 0 15 15"><path d="M12.6,4.6 A5.8,5.8 0 1 0 13.3,8.6" fill="none" stroke="#4a4d51" stroke-width="1.7"/><path d="M13.8,1 V5.8 H9z" fill="#4a4d51"/></svg>
<div style="left:2483px;top:167.5px;width:554px;height:29px;background:#fff;border:2px solid #1a6fe0;border-radius:15px"></div>
<svg style="left:2498px;top:175.5px;" width="9" height="12" viewBox="0 0 9 12"><rect x="0" y="5" width="9" height="7" rx="1" fill="#5f6368"/><path d="M2,5V3.4a2.5,2.5 0 0 1 5,0V5" fill="none" stroke="#5f6368" stroke-width="1.4"/></svg>
<div style="left:2518px;top:171px;width:121.5px;height:22px;background:#a8c8fa"></div>
<div class="t" style="top:172px;height:20px;line-height:20px;font-size:14px;color:#202124;letter-spacing:0.105px;left:2518.6px;">diss.natlib.uz/login/</div>
<svg style="left:2978px;top:174px;" width="16" height="15" viewBox="0 0 16 15"><path d="M9.5,1 L15,5.5 L9.5,10 V7.3 C6,7.3 4,8.5 3,11 C3.2,6.5 5.5,4 9.5,3.7z" fill="none" stroke="#5f6368" stroke-width="1.2"/><path d="M1,7V14H12" fill="none" stroke="#5f6368" stroke-width="1.2"/></svg>
<svg style="left:3010px;top:174px;" width="16" height="15" viewBox="0 0 16 15"><path d="M8,1 L10,5.8 L15.2,6.2 L11.2,9.6 L12.5,14.6 L8,11.9 L3.5,14.6 L4.8,9.6 L.8,6.2 L6,5.8z" fill="none" stroke="#5f6368" stroke-width="1.3"/></svg>
<svg style="left:3049px;top:174px;" width="16" height="16" viewBox="0 0 16 16"><circle cx="8" cy="9" r="6.5" fill="#f5a04a" opacity=".75"/><path d="M2,8 C4,4 11,3 14,7 C12,11 6,12 2,8z" fill="#e8742a"/><path d="M9,1 L12,6" stroke="#7a4a2a" stroke-width="1"/></svg>
<svg style="left:3082px;top:174px;" width="16" height="16" viewBox="0 0 16 16"><path d="M6,1.5 a1.7,1.7 0 0 1 3.4,0 V3 H13 V6.8 H14.3 a1.8,1.8 0 0 1 0,3.6 H13 V15 H9.2 V13.6 a1.6,1.6 0 0 0 -3.2,0 V15 H2 V11 H3.2 a1.7,1.7 0 0 0 0,-3.4 H2 V3 H6z" fill="#5f6368"/></svg>
<svg style="left:3115px;top:175px;" width="14" height="14" viewBox="0 0 14 14"><rect x="1" y="1" width="12" height="12" fill="none" stroke="#5f6368" stroke-width="2"/><rect x="7.5" y="1" width="5.5" height="12" fill="#5f6368"/></svg>
<div style="left:3143px;top:171px;width:22px;height:22px;background:#dee1e6;border-radius:11px"></div>
<svg style="left:3147px;top:175px;" width="14" height="14" viewBox="0 0 14 14"><circle cx="7" cy="4.3" r="2.7" fill="#4a5568"/><path d="M1,12.5 C1,9 4,8 7,8 C10,8 13,9 13,12.5z" fill="#4a5568"/></svg>
<svg style="left:3184px;top:174.5px;" width="4" height="15" viewBox="0 0 4 15"><circle cx="2" cy="2" r="1.6" fill="#5f6368"/><circle cx="2" cy="7.5" r="1.6" fill="#5f6368"/><circle cx="2" cy="13" r="1.6" fill="#5f6368"/></svg>
<div style="left:2695px;top:469px;width:44px;height:44px;background:#e8392b;border-radius:4px"></div>
<svg style="left:2703px;top:478px;" width="28" height="27" viewBox="0 0 28 27"><path d="M14,2.5 C17.5,5 21,5.8 24.5,5.8 C24.5,14 21,20 14,24 C7,20 3.5,14 3.5,5.8 C7,5.8 10.5,5 14,2.5z" fill="none" stroke="#fff" stroke-width="3"/></svg>
<div class="t" style="top:477px;height:30px;line-height:30px;font-size:24px;color:#e8392b;letter-spacing:-0.570px;left:2756.6px;"><span style="letter-spacing:-.3px">Kerio</span><b>Control</b></div>
<div style="left:2636px;top:538px;width:313px;height:170px;background:#fff;border-radius:4px;box-shadow:0 1px 5px rgba(0,0,0,.22)"></div>
<div style="left:2662px;top:568px;width:260px;height:32px;background:#fff;border:1px solid #c8c8c8;border-radius:3px;box-shadow:inset 0 1px 1px rgba(0,0,0,.06)"></div>
<div class="t" style="top:575px;height:18px;line-height:18px;font-size:13px;color:#777;letter-spacing:0.004px;left:2668.5px;">Username</div>
<div style="left:2662px;top:608px;width:260px;height:32px;background:#fff;border:1px solid #c8c8c8;border-radius:3px;box-shadow:inset 0 1px 1px rgba(0,0,0,.06)"></div>
<div class="t" style="top:615px;height:18px;line-height:18px;font-size:13px;color:#777;letter-spacing:-0.010px;left:2668.5px;">Password</div>
<div style="left:2661px;top:648px;width:260px;height:32px;background:linear-gradient(#e74c3c,#d33828);border:1px solid #8e2419;border-radius:3px"></div>
<div class="t" style="top:654.5px;height:18px;line-height:18px;font-size:13px;color:#fff;letter-spacing:-0.678px;font-weight:bold;left:2490.5px;width:600px;text-align:center;">Login</div>
<div style="left:1680px;top:1010px;width:1680px;height:40px;background:linear-gradient(90deg,#24373f 0%,#24373f 40%,#3f3f3f 45.5%,#3f3f3f 90%,#2a2f3d 92.5%,#1b2540 95%,#1a2340 100%)"></div>
<svg style="left:1696px;top:1022px;" width="16" height="16" viewBox="0 0 16 16"><g fill="#fff"><polygon points="0,2.3 6.6,1.4 6.6,7.6 0,7.6"/><polygon points="7.4,1.3 16,0 16,7.6 7.4,7.6"/><polygon points="0,8.4 6.6,8.4 6.6,14.6 0,13.7"/><polygon points="7.4,8.4 16,8.4 16,16 7.4,14.7"/></g></svg>
<div style="left:1728px;top:1010px;width:288px;height:40px;background:#f2f2f2"></div>
<svg style="left:1739px;top:1021px;" width="18" height="18" viewBox="0 0 18 18"><g fill="none" stroke="#222" stroke-width="1.4"><circle cx="11" cy="7" r="5.3"/><line x1="7.2" y1="10.8" x2="1.2" y2="16.8"/></g></svg>
<div class="t" style="top:1019.5px;height:21px;line-height:21px;font-size:15px;color:#1b1b1b;letter-spacing:0.184px;left:1768.5px;">Поиск</div>
<svg style="left:1936px;top:1018px;" width="80" height="32" viewBox="0 0 80 32"><defs><linearGradient id="bw" x1="0" y1="1" x2="1" y2="0"><stop offset="0" stop-color="#2488dc"/><stop offset="1" stop-color="#40cdf0"/></linearGradient><linearGradient id="bs" x1="0" y1="0" x2="1" y2="0"><stop offset="0" stop-color="#c9a276"/><stop offset=".5" stop-color="#ecd3a8"/><stop offset="1" stop-color="#e6cda4"/></linearGradient><linearGradient id="br" x1="0" y1="0" x2="0" y2="1"><stop offset="0" stop-color="#ece0c4"/><stop offset=".6" stop-color="#9a8c80"/><stop offset="1" stop-color="#5f5650"/></linearGradient></defs><path d="M1.9,32 C5,20 20,8 42,8 L50,10 L52.5,16.6 C35,20 18,25 8.7,32z" fill="url(#bw)"/><path d="M8.7,32 C18,25 35,20 52.5,16.3 L60,19 L60,32z" fill="url(#bs)"/><path d="M26.5,11.4 L41,9.3 L42,11.5 L36,12.3 L27,12z" fill="#c08e68"/><path d="M40.5,11 C40,7 45,6 49,7 C52,7 53,10 52,13 C48,15.5 42,15 38,13.5 C37,12.5 39,12 40.5,11z" fill="url(#br)"/><rect x="51.9" y="4.9" width="3.9" height="5" fill="#cfc8e0"/><rect x="55.9" y="4" width="5.4" height="5" fill="#b3957c"/><path d="M57,5.2h1.2v3h-1.2zM59,5.2h1.2v3h-1.2z" fill="#46568e"/><rect x="64.9" y="2.7" width="3" height="10" fill="#c9b15e"/><rect x="67.3" y="4.3" width="5.6" height="9" fill="#e4e0ee"/><rect x="74.7" y="4.3" width="3.1" height="9" fill="#85859a"/><rect x="69.8" y="5.8" width="6.6" height="7.2" fill="#ead6ba"/><path d="M71,7.3h4v1.2h-4zM71,9.8h4v1.2h-4z" fill="#8a6c54"/><rect x="60.5" y="6.8" width="5" height="5.6" fill="#eceaf6"/><path d="M61.3,7.6h1.5v1.6h-1.5zM63.3,7.6h1.5v1.6h-1.5zM61.3,9.8h1.5v1.6h-1.5zM63.3,9.8h1.5v1.6h-1.5z" fill="#1c4a9a"/><path d="M50,11.5 C50,8.5 54,8 55.5,9.5 C57,8 60,8.5 60,11 L58,14 L52,14.5z" fill="#6b9a28"/><rect x="55" y="11" width="6.2" height="3.4" fill="#f0d9ba"/><rect x="54.4" y="14.2" width="8.8" height="3" fill="#7b8a78"/><rect x="55.6" y="16.6" width="7.6" height="6.2" fill="#c9c9e2"/><path d="M56.5,18h5.8v.9h-5.8zM56.5,20h5.8v.9h-5.8z" fill="#9a9ac8"/><rect x="63.3" y="12.9" width="16" height="9" fill="#f5eedb"/><path d="M65,14.3h1.4v1.4h-1.4zM68.2,14.3h1.4v1.4h-1.4zM71.4,14.3h1.4v1.4h-1.4zM74.6,14.3h1.4v1.4h-1.4zM65,17.5h1.4v1.4h-1.4zM68.2,17.5h1.4v1.4h-1.4zM71.4,17.5h1.4v1.4h-1.4z" fill="#c9a263"/><path d="M50.7,32 C49.5,28 54,24.5 58,26 C59.5,21.5 66,20.5 70,23 C71.5,18 76,16 80,13 L80,32z" fill="#6f9a22"/><path d="M56,32 C57,29 62,27.5 66,29 C68,25.5 74,24 80,25 L80,32z" fill="#5c8419"/></svg>
<svg style="left:2031.2px;top:1022.3px;" width="17" height="16" viewBox="0 0 17 16"><g fill="none" stroke="#fff" stroke-width="1.2"><path d="M.6,0V2.5H10.6V0 M.6,15.3V12.7H10.6V15.3"/><rect x=".6" y="4.9" width="10" height="5.6"/><path d="M14.7,0V2.8 M14.7,8.2V15.3"/></g><rect x="13.1" y="4.2" width="3.3" height="3.1" fill="#fff"/></svg>
<div style="left:2263px;top:1010px;width:48px;height:40px;background:rgba(255,255,255,.18)"></div>
<svg style="left:2079.7px;top:1021px;" width="21.6" height="18" viewBox="0 0 21.6 18"><path d="M0,.9 a.9,.9 0 0 1 .9,-.9 h8.2 l1.4,1.5 h10.2 a.9,.9 0 0 1 .9,.9 v14.6 h-21.6z" fill="#ffd55c"/><path d="M0,.9 a.9,.9 0 0 1 .9,-.9 h8.2 l1.4,1.5 l-1.2,1.1 h-9.3z" fill="#eaa200"/><path d="M0,2.6h21.6v14.4h-21.6z" fill="#ffd862"/><path d="M4.2,18v-7.2a1,1 0 0 1 1,-1h11.6a1,1 0 0 1 1,1v7.2h-3.9v-4.7h-5.7v4.7z" fill="#3b97e8"/><rect x="8.2" y="13.3" width="5.7" height="3.7" fill="#f6be2e"/></svg>
<svg style="left:2128px;top:1018px;" width="24" height="24" viewBox="0 0 24 24"><path d="M0,9 L12,1 L24,9 V23 H0z" fill="#0f5fb8"/><path d="M2.5,9 L12,2.8 L21.5,9 V14 H2.5z" fill="#1d7ad6"/><path d="M2.5,8.5 H21.5 L12,15.5z" fill="#fff"/><path d="M0,9 L12,16.5 L24,9 V23 H0z" fill="#2ba7ee"/><path d="M24,9 V23 H0 L24,9z" fill="#1a8fe0" opacity=".7"/></svg>
<svg style="left:2177px;top:1018px;" width="24" height="24" viewBox="0 0 24 24"><rect x=".5" y=".5" width="23" height="23" fill="#b30000" stroke="#8e0000" stroke-dasharray="1.5 1"/><text x="3" y="19" font-family="Liberation Sans,sans-serif" font-weight="bold" font-style="italic" font-size="19" fill="#fff" textLength="18">Fz</text></svg>
<svg style="left:2226px;top:1018px;" width="24" height="24" viewBox="0 0 24 24"><rect x="1" y="5" width="6" height="13" fill="#9aa3a8"/><rect x="4" y="2" width="18" height="14" rx="1" fill="#d8dde0" stroke="#9ea7ab"/><rect x="6" y="4" width="14" height="10" fill="#e9f4fb"/><polyline points="6,11 9,11 10.5,6 12,12 13.5,8 15,11 17,9.5 20,11" fill="none" stroke="#3a8fd0" stroke-width="1.1"/><path d="M10,16h6l1.5,4h-9z" fill="#c3c9cc"/><ellipse cx="13" cy="21" rx="6" ry="1.8" fill="#dfe3e5"/></svg>
<svg style="left:2275px;top:1018px;" width="24" height="24" viewBox="0 0 24 24"><path d="M12,6 L22.392,6 A12,12 0 0 0 1.608,6 L6.804,15z" fill="#ea4335"/><path d="M12,6 L22.392,6 A12,12 0 0 1 12,24 L17.196,15z" fill="#fbbc05"/><path d="M17.196,15 L12,24 A12,12 0 0 1 1.608,6 L6.804,15z" fill="#34a853"/><circle cx="12" cy="12" r="6" fill="#fff"/><circle cx="12" cy="12" r="4.75" fill="#4285f4"/></svg>
<div style="left:2071px;top:1048px;width:31px;height:2px;background:#76b9ed"></div>
<div style="left:2103px;top:1048px;width:8px;height:2px;background:#5d93bf"></div>
<div style="left:2218px;top:1048px;width:40px;height:2px;background:#76b9ed"></div>
<div style="left:2263px;top:1048px;width:48px;height:2px;background:#76b9ed"></div>
<svg style="left:3043px;top:1026px;" width="12" height="8" viewBox="0 0 12 8"><polyline points="0.7,7 6,1.2 11.3,7" fill="none" stroke="#fff" stroke-width="1.3"/></svg>
<svg style="left:3065px;top:1021px;" width="17" height="18" viewBox="0 0 17 18"><path d="M8,0.5 C10,2 13,2.6 15.5,2.6 C15.5,9 13.5,14 8,17 C2.5,14 .5,9 .5,2.6 C3,2.6 6,2 8,.5z" fill="#fff" stroke="#222" stroke-width=".8"/><path d="M8,.5V17 M.6,8.5H15.3" stroke="#111" stroke-width="1.6"/><circle cx="12.5" cy="13.5" r="4.2" fill="#1e9e45"/><polyline points="10.5,13.6 12,15 14.6,12" fill="none" stroke="#fff" stroke-width="1.2"/></svg>
<svg style="left:3088px;top:1022px;" width="17" height="17" viewBox="0 0 17 17"><rect x="4" y="2" width="12" height="10" fill="#cfd6da" stroke="#8d979c"/><rect x="6" y="4" width="8" height="6" fill="#39a0e8"/><rect x="7" y="12" width="6" height="2" fill="#9aa3a8"/><rect x="5" y="14" width="10" height="1.5" fill="#b8c0c4"/><text x="0" y="11" font-family="Liberation Sans,sans-serif" font-weight="bold" font-size="12" fill="#1446c8">R</text></svg>
<svg style="left:3112px;top:1021px;" width="18" height="18" viewBox="0 0 18 18"><circle cx="9" cy="9" r="8.3" fill="#e8ecef" stroke="#b8c0c6"/><circle cx="9" cy="9" r="5.6" fill="#5b88ad"/><circle cx="9" cy="9" r="3.2" fill="#86aac8"/><path d="M6.5,9h5" stroke="#3d6384" stroke-width="1"/></svg>
<svg style="left:3137px;top:1021px;" width="16" height="18" viewBox="0 0 16 18"><g fill="none" stroke="#fff" stroke-width="1.1"><rect x="2" y="5" width="8.5" height="8" rx="1.5"/><path d="M10.5,8 L13.8,6.2 V11.8 L10.5,10"/><path d="M3,2.2 Q7,-0.3 11,2.2 M3,15.8 Q7,18.3 11,15.8"/></g></svg>
<svg style="left:3160px;top:1022px;" width="18" height="16" viewBox="0 0 18 16"><g fill="none" stroke="#fff" stroke-width="1.1"><rect x="4.5" y="1.5" width="12.5" height="9"/><path d="M10.7,10.5V14.5 M6.5,14.5H15"/><rect x=".6" y="1.5" width="3.9" height="3.6"/><path d="M2.5,5V12.5"/></g></svg>
<svg style="left:3184px;top:1022px;" width="18" height="16" viewBox="0 0 18 16"><g fill="none" stroke="#fff" stroke-width="1.1"><path d="M.8,5.5H3.5L7,2V14L3.5,10.5H.8z"/><path d="M9.3,5.6 Q10.8,8 9.3,10.4 M11.6,3.8 Q14,8 11.6,12.2 M14,2 Q17.4,8 14,14"/></g></svg>
<div class="t" style="top:1021.1px;height:17px;line-height:17px;font-size:12px;color:#fff;letter-spacing:-1.205px;left:2922.7px;width:600px;text-align:center;">ENG</div>
<div class="t" style="top:1013.3px;height:17px;line-height:17px;font-size:12px;color:#fff;letter-spacing:-0.606px;left:2974px;width:600px;text-align:center;">12:57</div>
<div class="t" style="top:1031.3px;height:17px;line-height:17px;font-size:12px;color:#fff;letter-spacing:-0.706px;left:2974px;width:600px;text-align:center;">15.05.2023</div>
<svg style="left:3319px;top:1021px;" width="24" height="25" viewBox="0 0 24 25"><path d="M0,1H16V13.5H7L3.6,17V13.5H0z" fill="#fff"/><path d="M2.6,4.2H13.4 M2.6,6.7H13.4 M2.6,9.2H13.4" stroke="#3a3f55" stroke-width="1"/><circle cx="15.2" cy="16" r="7.3" fill="#23283c" stroke="#b9bdc8" stroke-width="1"/><text x="15.2" y="20.2" text-anchor="middle" font-family="Liberation Sans,sans-serif" font-weight="bold" font-size="11.5" fill="#fff">2</text></svg>
<div style="left:3355.5px;top:1010px;width:1px;height:40px;background:#8a8f9c"></div>
</body></html>
